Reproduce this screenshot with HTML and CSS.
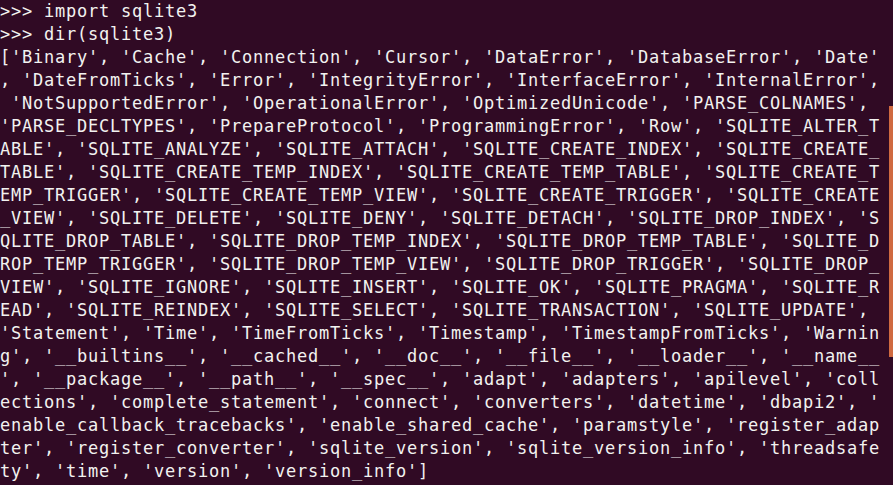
FILE: index.html
```html
<!DOCTYPE html>
<html>
<head>
<meta charset="utf-8">
<link rel="stylesheet" href="styles.css">
</head>
<body>
<div class="terminal">
<pre class="output">&gt;&gt;&gt; import sqlite3
&gt;&gt;&gt; dir(sqlite3)
['Binary', 'Cache', 'Connection', 'Cursor', 'DataError', 'DatabaseError', 'Date'
, 'DateFromTicks', 'Error', 'IntegrityError', 'InterfaceError', 'InternalError',
 'NotSupportedError', 'OperationalError', 'OptimizedUnicode', 'PARSE_COLNAMES', 
'PARSE_DECLTYPES', 'PrepareProtocol', 'ProgrammingError', 'Row', 'SQLITE_ALTER_T
ABLE', 'SQLITE_ANALYZE', 'SQLITE_ATTACH', 'SQLITE_CREATE_INDEX', 'SQLITE_CREATE_
TABLE', 'SQLITE_CREATE_TEMP_INDEX', 'SQLITE_CREATE_TEMP_TABLE', 'SQLITE_CREATE_T
EMP_TRIGGER', 'SQLITE_CREATE_TEMP_VIEW', 'SQLITE_CREATE_TRIGGER', 'SQLITE_CREATE
_VIEW', 'SQLITE_DELETE', 'SQLITE_DENY', 'SQLITE_DETACH', 'SQLITE_DROP_INDEX', 'S
QLITE_DROP_TABLE', 'SQLITE_DROP_TEMP_INDEX', 'SQLITE_DROP_TEMP_TABLE', 'SQLITE_D
ROP_TEMP_TRIGGER', 'SQLITE_DROP_TEMP_VIEW', 'SQLITE_DROP_TRIGGER', 'SQLITE_DROP_
VIEW', 'SQLITE_IGNORE', 'SQLITE_INSERT', 'SQLITE_OK', 'SQLITE_PRAGMA', 'SQLITE_R
EAD', 'SQLITE_REINDEX', 'SQLITE_SELECT', 'SQLITE_TRANSACTION', 'SQLITE_UPDATE', 
'Statement', 'Time', 'TimeFromTicks', 'Timestamp', 'TimestampFromTicks', 'Warnin
g', '__builtins__', '__cached__', '__doc__', '__file__', '__loader__', '__name__
', '__package__', '__path__', '__spec__', 'adapt', 'adapters', 'apilevel', 'coll
ections', 'complete_statement', 'connect', 'converters', 'datetime', 'dbapi2', '
enable_callback_tracebacks', 'enable_shared_cache', 'paramstyle', 'register_adap
ter', 'register_converter', 'sqlite_version', 'sqlite_version_info', 'threadsafe
ty', 'time', 'version', 'version_info']</pre>
<div class="scrollbar"><div class="thumb"></div></div>
</div>
</body>
</html>
```
FILE: styles.css
```css
html, body {
  margin: 0;
  padding: 0;
  background: #300a24;
  height: 100%;
  overflow: hidden;
}
.terminal {
  display: flex;
  height: 485px;
  background: #300a24;
}
.output {
  flex: 1;
  margin: 0;
  padding: 0 0 0 0;
  font-family: "DejaVu Sans Mono", "Liberation Mono", monospace;
  font-size: 17px;
  letter-spacing: 0.765px;
  line-height: 23px;
  color: #f2f2f0;
  white-space: pre;
}
.scrollbar {
  width: 4px;
  display: flex;
  flex-direction: column;
}
.thumb {
  margin-top: 106px;
  height: 251px;
  background: #cf6a40;
}
```
